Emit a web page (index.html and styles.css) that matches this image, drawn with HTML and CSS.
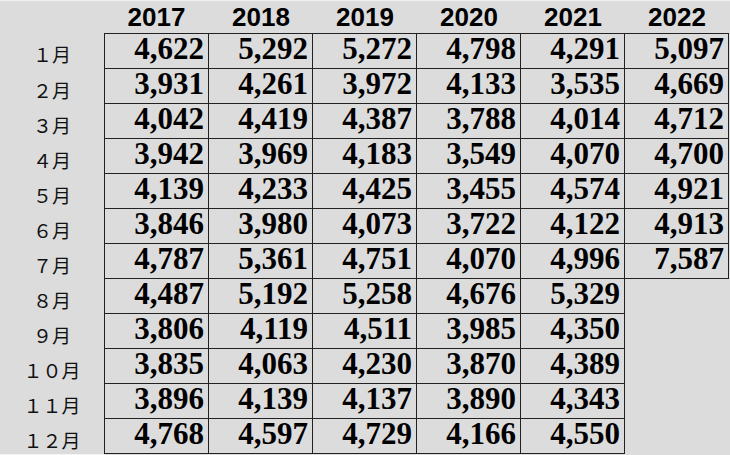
FILE: index.html
```html
<!DOCTYPE html>
<html lang="ja">
<head>
<meta charset="utf-8">
<title>月別推移</title>
<link rel="stylesheet" href="styles.css">
</head>
<body>
<div class="sheet">
  <div class="h"></div>
  <div class="h">2017</div><div class="h">2018</div><div class="h">2019</div><div class="h">2020</div><div class="h">2021</div><div class="h">2022</div>

  <div class="m">１月</div>
  <div class="c top left">4,622</div><div class="c top">5,292</div><div class="c top">5,272</div><div class="c top">4,798</div><div class="c top">4,291</div><div class="c top">5,097</div>

  <div class="m">２月</div>
  <div class="c left">3,931</div><div class="c">4,261</div><div class="c">3,972</div><div class="c">4,133</div><div class="c">3,535</div><div class="c">4,669</div>

  <div class="m">３月</div>
  <div class="c left">4,042</div><div class="c">4,419</div><div class="c">4,387</div><div class="c">3,788</div><div class="c">4,014</div><div class="c">4,712</div>

  <div class="m">４月</div>
  <div class="c left">3,942</div><div class="c">3,969</div><div class="c">4,183</div><div class="c">3,549</div><div class="c">4,070</div><div class="c">4,700</div>

  <div class="m">５月</div>
  <div class="c left">4,139</div><div class="c">4,233</div><div class="c">4,425</div><div class="c">3,455</div><div class="c">4,574</div><div class="c">4,921</div>

  <div class="m">６月</div>
  <div class="c left">3,846</div><div class="c">3,980</div><div class="c">4,073</div><div class="c">3,722</div><div class="c">4,122</div><div class="c">4,913</div>

  <div class="m">７月</div>
  <div class="c left">4,787</div><div class="c">5,361</div><div class="c">4,751</div><div class="c">4,070</div><div class="c">4,996</div><div class="c">7,587</div>

  <div class="m">８月</div>
  <div class="c left">4,487</div><div class="c">5,192</div><div class="c">5,258</div><div class="c">4,676</div><div class="c">5,329</div><div class="e"></div>

  <div class="m">９月</div>
  <div class="c left">3,806</div><div class="c">4,119</div><div class="c">4,511</div><div class="c">3,985</div><div class="c">4,350</div><div class="e"></div>

  <div class="m">１０月</div>
  <div class="c left">3,835</div><div class="c">4,063</div><div class="c">4,230</div><div class="c">3,870</div><div class="c">4,389</div><div class="e"></div>

  <div class="m">１１月</div>
  <div class="c left">3,896</div><div class="c">4,139</div><div class="c">4,137</div><div class="c">3,890</div><div class="c">4,343</div><div class="e"></div>

  <div class="m">１２月</div>
  <div class="c left">4,768</div><div class="c">4,597</div><div class="c">4,729</div><div class="c">4,166</div><div class="c">4,550</div><div class="e"></div>

  <div class="foot"></div>
</div>
</body>
</html>
```
FILE: styles.css
```css
html, body {
  margin: 0;
  padding: 0;
  background: #dcdcdc;
  width: 730px;
  height: 455px;
  overflow: hidden;
}

.sheet {
  display: grid;
  grid-template-columns: 104px 105px repeat(5, 104px);
  grid-template-rows: 32px 36px repeat(11, 35px) 1px;
  border-top: 1px solid #f0f0f0;
}

.h {
  font-family: "Liberation Sans", Arial, sans-serif;
  font-weight: bold;
  font-size: 26px;
  line-height: 33px;
  text-align: center;
  color: #000;
}

.m {
  font-family: "Noto Sans CJK JP", sans-serif;
  font-size: 19px;
  line-height: 35px;
  padding-top: 3px;
  text-align: center;
  color: #111;
}

.c {
  box-sizing: border-box;
  border-right: 1px solid #222;
  border-bottom: 1px solid #222;
  font-family: "Liberation Serif", "Times New Roman", serif;
  font-weight: bold;
  font-size: 31px;
  line-height: 30px;
  text-align: right;
  padding-right: 4px;
  color: #000;
}

.c.top {
  border-top: 1px solid #222;
}

.c.left {
  border-left: 1px solid #222;
}

.foot {
  grid-column: 1;
  background: #f4f4f4;
}
```
